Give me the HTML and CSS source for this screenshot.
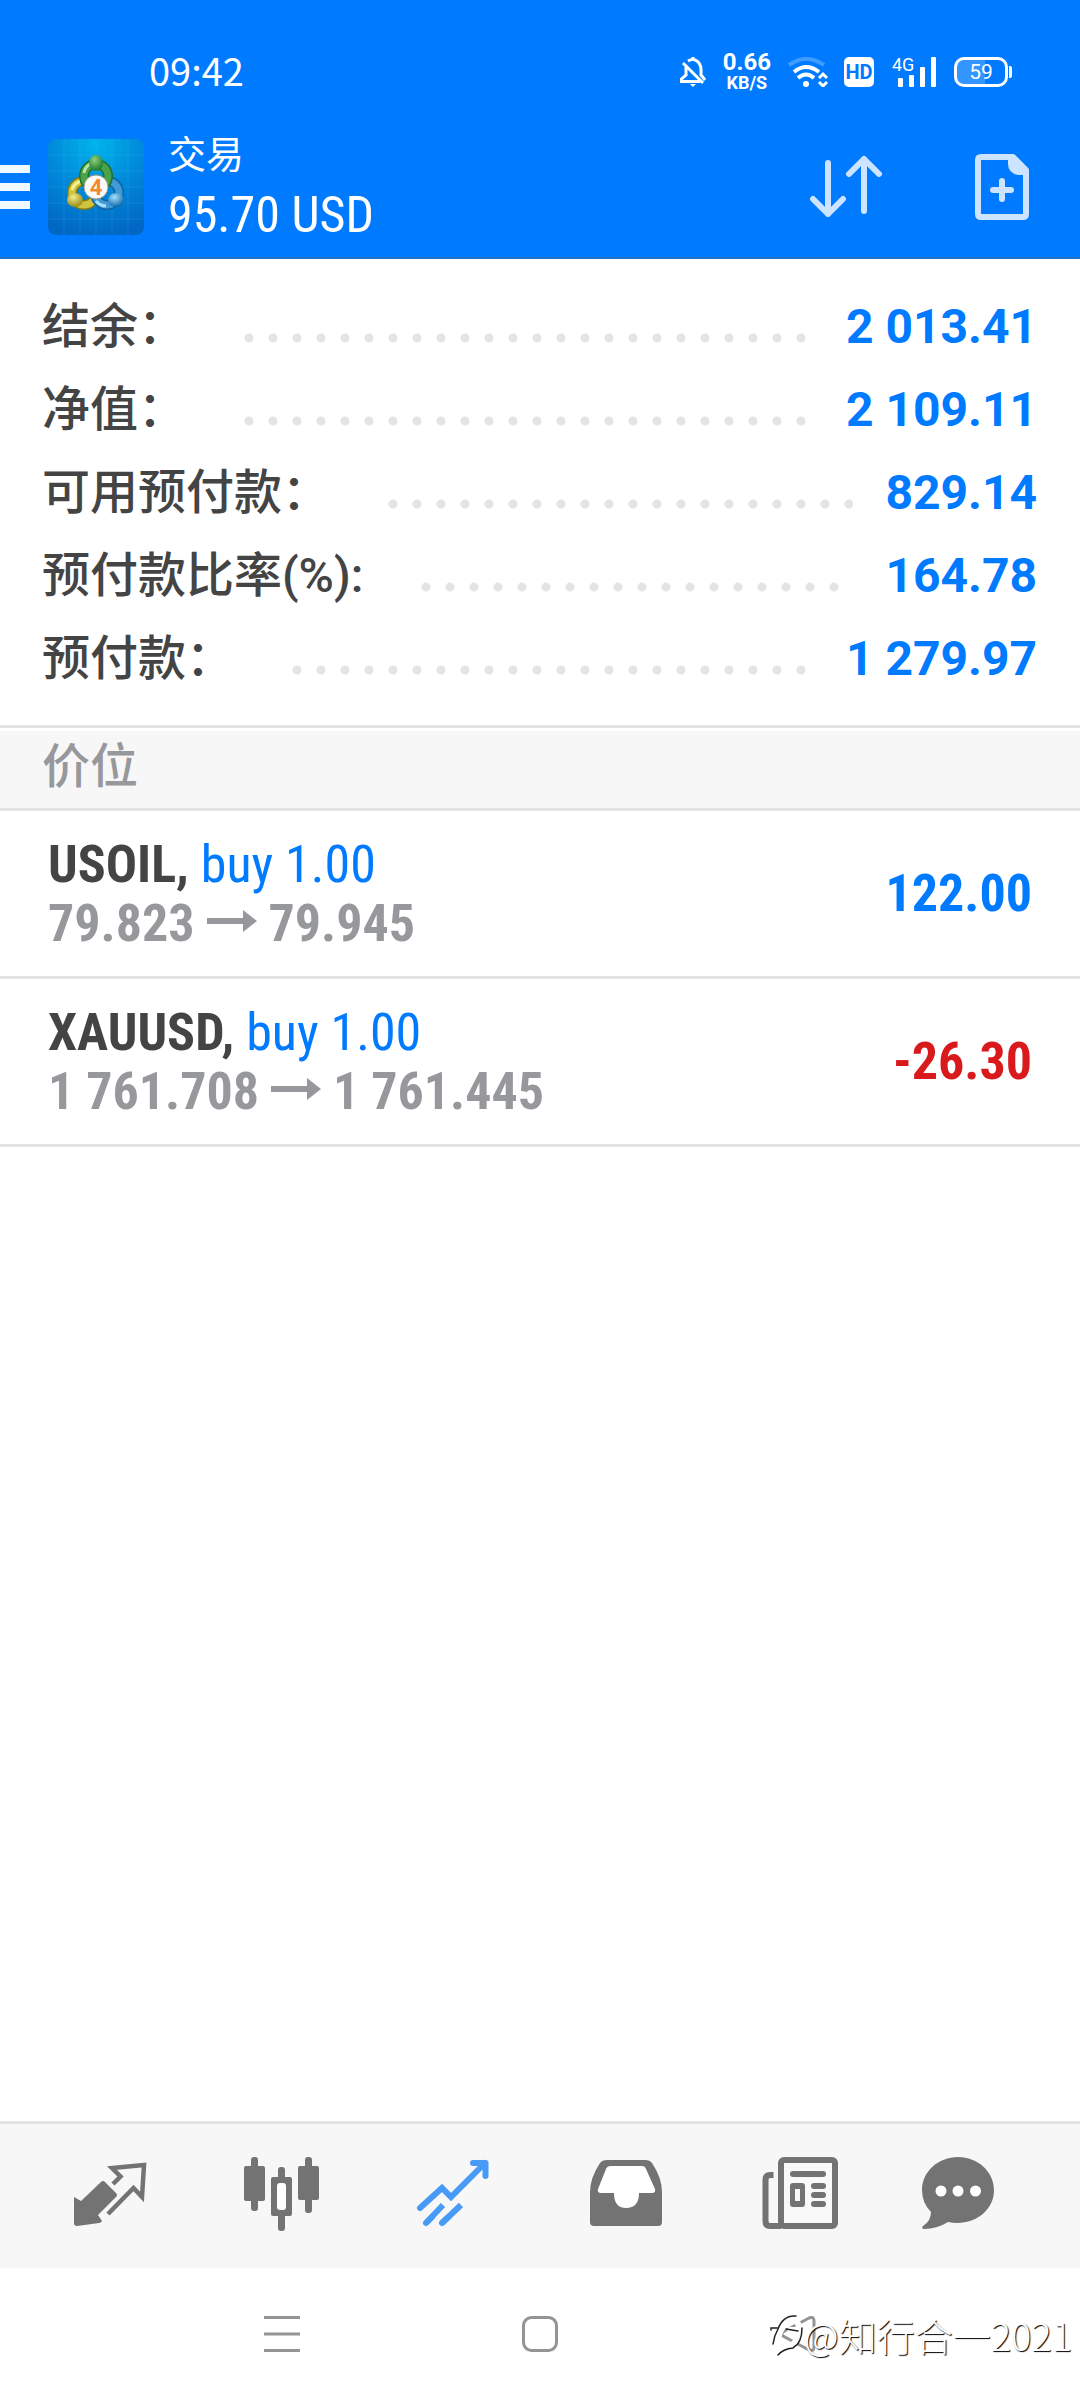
FILE: index.html
```html
<!DOCTYPE html>
<html lang="zh-CN">
  <head>
    <meta charset="utf-8">
    <meta name="viewport" content="width=device-width, initial-scale=1">
    <title>交易</title>
    <link rel="stylesheet" href="styles.css">
  </head>
  <body>
    <header class="header">
      <div class="status-bar">
        <span class="clock">09:42</span>
        <div class="status-icons">
          <svg class="bell" width="26" height="30" viewBox="0 0 26 30" fill="none" stroke="#fff" stroke-width="3">
            <path d="M8 4 Q13 1 17 4 Q21 7 21 13 V18 L25 23"/>
            <path d="M13 0 V4 M3 6 L23 26 M6 10 V18 L1.500 22 V24.500 H20"/>
            <path d="M10 27 H16 L13 30 Z" fill="#fff" stroke="none"/>
          </svg>
          <div class="net-speed">
            <span class="net-value">0.66</span>
            <span class="net-unit">KB/S</span>
          </div>
          <svg class="wifi" width="40" height="30" viewBox="0 0 40 30" fill="none" stroke="#fff" stroke-width="4">
            <path d="M1 8 Q18 -4 36 8" stroke-opacity=".25"/>
            <path d="M6 15 Q18 5 31 15 M10 21 Q18 14 26 21"/>
            <circle cx="18" cy="27" r="3" fill="#fff" stroke="none"/>
            <path d="M31 21 L35 17 L39 21 M31 25 L35 29 L39 25" stroke-width="3"/>
          </svg>
          <span class="hd">HD</span>
          <div class="signal">
            <span class="signal-type">4G</span>
            <svg width="40" height="30" viewBox="0 0 40 30" fill="#fff">
              <rect x="1" y="21" width="5" height="9" rx="1"/>
              <rect x="12" y="18" width="5" height="12" rx="1"/>
              <rect x="23" y="10" width="5" height="20" rx="1"/>
              <rect x="34" y="0" width="5" height="30" rx="1"/>
            </svg>
          </div>
          <span class="battery">59</span>
        </div>
      </div>

      <div class="toolbar">
        <button class="icon-button menu-button" aria-label="菜单">
          <svg width="30" height="44" viewBox="0 0 30 44" fill="#f0faff">
            <path d="M0 0H30V8H0Z M0 18H30V26H0Z M0 36H30V44H0Z"/>
          </svg>
        </button>
        <svg class="app-icon" width="96" height="96" viewBox="0 0 96 96">
          <defs>
            <radialGradient id="sky" cx="50%" cy="5%" r="95%">
              <stop offset="0" stop-color="#00b4ea"/>
              <stop offset=".5" stop-color="#008adb"/>
              <stop offset="1" stop-color="#0068c4"/>
            </radialGradient>
            <radialGradient id="green" cx="40%" cy="30%" r="70%">
              <stop offset="0" stop-color="#8fd07c"/>
              <stop offset="1" stop-color="#1d7a2c"/>
            </radialGradient>
            <radialGradient id="yellow" cx="40%" cy="30%" r="70%">
              <stop offset="0" stop-color="#f3ec8a"/>
              <stop offset="1" stop-color="#988c14"/>
            </radialGradient>
            <radialGradient id="blue" cx="40%" cy="30%" r="70%">
              <stop offset="0" stop-color="#a4e0fb"/>
              <stop offset="1" stop-color="#1068ac"/>
            </radialGradient>
          </defs>
          <rect width="96" height="96" rx="8" fill="url(#sky)"/>
          <path d="M16 0V96M32 0V96M48 0V96M64 0V96M80 0V96M0 16H96M0 32H96M0 48H96M0 64H96M0 80H96" stroke="#6fd0ff" stroke-opacity=".15"/>
          <g fill="none">
            <circle cx="36" cy="54" r="12" stroke="#857a10" stroke-width="10"/>
            <circle cx="36" cy="54" r="12" stroke="#cfc43c" stroke-width="7"/>
            <path d="M24 51 A13 13 0 0 1 33 42" stroke="#f5f09a" stroke-width="3"/>
            <circle cx="59" cy="54" r="12" stroke="#12609c" stroke-width="10"/>
            <circle cx="59" cy="54" r="12" stroke="#3f9ad6" stroke-width="7"/>
            <path d="M48 62 A13 13 0 0 0 58 67" stroke="#a8e0fa" stroke-width="3"/>
            <circle cx="48" cy="37" r="12" stroke="#1f6f2c" stroke-width="10"/>
            <circle cx="48" cy="37" r="12" stroke="#4ba24a" stroke-width="7"/>
            <path d="M36 34 A13 13 0 0 1 42 25" stroke="#b9e6a8" stroke-width="3"/>
          </g>
          <ellipse cx="48" cy="24" rx="7" ry="8" fill="url(#green)"/>
          <ellipse cx="27" cy="61" rx="8" ry="7" fill="url(#yellow)"/>
          <ellipse cx="68" cy="61" rx="8" ry="7" fill="url(#blue)"/>
          <circle cx="48" cy="48" r="12" fill="#fafafa" stroke="#9a9a80"/>
          <text class="app-icon-text" x="48" y="56" text-anchor="middle">4</text>
        </svg>
        <div class="title">
          <h1>交易</h1>
          <p class="profit">95.70 USD</p>
        </div>
        <button class="icon-button sort-button" aria-label="排序">
          <svg width="76" height="66" viewBox="0 0 76 66" fill="none" stroke="#cce4ff" stroke-width="6" stroke-linecap="round" stroke-linejoin="round">
            <path d="M19 9V60M4 45L19 60L34 45M55 57V5M40 20L55 5L70 20"/>
          </svg>
        </button>
        <button class="icon-button" aria-label="新订单">
          <svg width="54" height="66" viewBox="0 0 54 66" fill="none" stroke="#cce4ff" stroke-width="6">
            <path d="M6 3H38L51 16V60Q51 63 48 63H6Q3 63 3 60V6Q3 3 6 3Z" stroke-linejoin="round"/>
            <path d="M33 3H40L53 17V21H43Q33 19 33 10Z" fill="#cce4ff" stroke="none"/>
            <path d="M27 27V45M18 36H36" stroke-linecap="round"/>
          </svg>
        </button>
      </div>
    </header>

    <main>
      <dl class="account">
        <div class="account-row">
          <dt>结余：</dt><dd>2 013.41</dd>
        </div>
        <div class="account-row">
          <dt>净值：</dt><dd>2 109.11</dd>
        </div>
        <div class="account-row">
          <dt>可用预付款：</dt><dd>829.14</dd>
        </div>
        <div class="account-row">
          <dt>预付款比率(%):</dt><dd>164.78</dd>
        </div>
        <div class="account-row">
          <dt>预付款：</dt><dd>1 279.97</dd>
        </div>
      </dl>

      <h2 class="section-title">价位</h2>

      <ul class="positions">
        <li class="position">
          <div>
            <p class="symbol">USOIL, <span class="buy">buy 1.00</span></p>
            <p class="prices">79.823
              <svg class="arrow" width="50" height="22" viewBox="0 0 50 22" fill="#97989c"><path d="M0 8H36V0L50 11L36 22V14H0Z"/></svg>
              79.945</p>
          </div>
          <span class="result">122.00</span>
        </li>
        <li class="position">
          <div>
            <p class="symbol">XAUUSD, <span class="buy">buy 1.00</span></p>
            <p class="prices">1 761.708
              <svg class="arrow" width="50" height="22" viewBox="0 0 50 22" fill="#97989c"><path d="M0 8H36V0L50 11L36 22V14H0Z"/></svg>
              1 761.445</p>
          </div>
          <span class="result loss">-26.30</span>
        </li>
      </ul>
    </main>

    <nav class="tabs">
      <button class="icon-button" aria-label="行情">
        <svg width="104" height="84" viewBox="0 0 104 84" fill="#737373">
          <path d="M16 43L23 47L43 28Q45 26 47 28L58 39Q60 41 58 43L40 61L44 67Q43 69 41 69L19 72Q16 72 16 69Z"/>
          <path d="M55 30L62.500 22.500L54 14L86 11L84 43L75.500 34L50 60" fill="none" stroke="#737373" stroke-width="4.500"/>
        </svg>
      </button>
      <button class="icon-button" aria-label="图表">
        <svg width="104" height="84" viewBox="0 0 104 84" fill="#737373">
          <rect x="21" y="3" width="7" height="54" rx="3"/>
          <rect x="14" y="12" width="21" height="35" rx="2"/>
          <rect x="48" y="13" width="7" height="64" rx="3"/>
          <rect x="41" y="23" width="21" height="39" rx="2"/>
          <rect x="47" y="29" width="9" height="27" rx="3" fill="#fff"/>
          <rect x="75" y="3" width="7" height="56" rx="3"/>
          <rect x="68" y="12" width="21" height="34" rx="2"/>
        </svg>
      </button>
      <button class="icon-button" aria-label="交易">
        <svg width="104" height="84" viewBox="0 0 104 84" fill="none" stroke="#479af6" stroke-width="6">
          <path d="M17 54L39 34L48 43L82 9" stroke-linecap="round"/>
          <path d="M70 9H82.500V22" stroke-linecap="round" stroke-linejoin="round"/>
          <path d="M23 69L40 51M39 69L58 51"/>
          <path d="M23 69L29 63M39 69L45 63.500" stroke-linecap="round"/>
        </svg>
      </button>
      <button class="icon-button" aria-label="历史">
        <svg width="104" height="84" viewBox="0 0 104 84" fill="#737373">
          <path d="M32 6H70Q75 6 77 9Q87 24 87 38V68Q87 72 83 72H19Q15 72 15 68V38Q15 24 25 9Q27 6 32 6Z"/>
          <path d="M36 12H67Q70 12 71 15L80 35Q81 39 77 39H64Q64 54 51 54Q39 54 39 39H26Q22 39 23 35L31 15Q32 12 36 12Z" fill="#fff"/>
        </svg>
      </button>
      <button class="icon-button" aria-label="新闻">
        <svg width="104" height="84" viewBox="0 0 104 84" fill="#737373">
          <path d="M34 72H23Q18.500 72 18.500 67V26Q18.500 21 23 21H26.500" fill="none" stroke="#737373" stroke-width="6"/>
          <rect x="34" y="6" width="54" height="66" rx="3" fill="#f9f9f9" stroke="#737373" stroke-width="6"/>
          <rect x="43" y="17" width="36" height="6" rx="3"/>
          <rect x="43" y="29" width="15" height="24" rx="3"/>
          <rect x="48" y="35" width="5" height="12" fill="#f7f7f7"/>
          <rect x="64" y="29" width="15" height="6" rx="3"/>
          <rect x="64" y="38" width="15" height="6" rx="3"/>
          <rect x="64" y="47" width="15" height="6" rx="3"/>
        </svg>
      </button>
      <button class="icon-button" aria-label="消息">
        <svg width="104" height="84" viewBox="0 0 104 84" fill="#737373">
          <path d="M38 3C58 3 74 18 74 36C74 58 52 73 28 68Q17 75 4 75Q1 75 3 72Q11 67 11 58Q2 49 2 36C2 18 18 3 38 3Z"/>
          <g fill="#fff"><circle cx="21" cy="37" r="5.500"/><circle cx="38" cy="37" r="5.500"/><circle cx="55.500" cy="37" r="5.500"/></g>
        </svg>
      </button>
    </nav>

    <footer class="system-nav">
      <button class="icon-button" aria-label="最近任务">
        <svg width="36" height="36" viewBox="0 0 36 36" stroke="#949494" stroke-width="3"><path d="M0 1.500H36M0 18H36M0 34.500H36"/></svg>
      </button>
      <button class="icon-button" aria-label="主屏幕">
        <svg width="36" height="36" viewBox="0 0 36 36" fill="none" stroke="#949494" stroke-width="3"><rect x="1.500" y="1.500" width="33" height="33" rx="8"/></svg>
      </button>
      <button class="icon-button" aria-label="返回">
        <svg width="36" height="36" viewBox="0 0 36 36" fill="none" stroke="#949494" stroke-width="3"><path d="M3 16L29 2Q34 0 34 5V31Q34 36 29 34L3 20Q1 18 3 16Z"/></svg>
      </button>
      <div class="watermark">
        <svg width="34" height="46" viewBox="0 0 34 46" fill="none" stroke-linecap="round">
          <path d="M3 19H10L6 33Q11 12 20 8Q29 6 29 18L18 18L29 22Q27 31 18 36" stroke="#fff" stroke-width="6"/>
          <path d="M1 18V16H8M3 32Q4 24 8 17Q13 3 26 4M16 17L28 19M32 16Q32 31 23 36Q13 37 8 43" stroke="#222" stroke-width="1.500"/>
        </svg>
        <span>@知行合一2021</span>
      </div>
    </footer>
  </body>
</html>
```

FILE: styles.css
```css
* {
  box-sizing: border-box;
}
body {
  margin: 0;
  min-height: 100vh;
  display: flex;
  flex-direction: column;
  background: #fff;
  color: #444;
  font-family: Roboto, "Noto Sans CJK SC", sans-serif;
}
h1, h2, p, dl, dd, ul {
  margin: 0;
  padding: 0;
}
main {
  flex: 1;
}
svg {
  display: block;
  flex-shrink: 0;
}
.icon-button {
  display: flex;
  align-items: center;
  justify-content: center;
  padding: 0;
  border: none;
  background: none;
  cursor: pointer;
}

/* header */
.header {
  background: #007aff;
  border-bottom: 2px solid #1c6fcb;
  color: #fff;
}
.status-bar {
  display: flex;
  align-items: center;
  justify-content: space-between;
  height: 118px;
  padding: 26px 72px 0 149px;
}
.clock {
  padding-bottom: 6px;
  font-family: "Noto Sans CJK SC", sans-serif;
  font-size: 38px;
}
.status-icons {
  display: flex;
  align-items: center;
}
.net-speed {
  display: flex;
  flex-direction: column;
  align-items: center;
  margin: 0 17px;
  font-weight: 700;
}
.net-value {
  font-size: 24px;
  line-height: 22px;
}
.net-unit {
  font-size: 18px;
  line-height: 20px;
}
.hd {
  width: 30px;
  height: 30px;
  margin: 0 18px 0 16px;
  border-radius: 5px;
  background: #fff;
  color: #007aff;
  font-size: 20px;
  font-weight: 700;
  line-height: 31px;
  text-align: center;
}
.signal {
  position: relative;
  padding-left: 5px;
}
.signal-type {
  position: absolute;
  top: -1px;
  left: 0;
  font-size: 18px;
  line-height: 18px;
}
.battery {
  position: relative;
  width: 54px;
  height: 30px;
  margin-left: 17px;
  border: 3px solid #fff;
  border-radius: 10px;
  background: linear-gradient(90deg, #3395ff 59%, #007aff 59%);
  font-size: 21px;
  line-height: 24px;
  text-align: center;
}
.battery::after {
  content: "";
  position: absolute;
  top: 6px;
  right: -7px;
  width: 3px;
  height: 12px;
  border-radius: 0 2px 2px 0;
  background: #fff;
}
.toolbar {
  display: flex;
  align-items: center;
  height: 139px;
  padding: 0 51px 2px 0;
}
.menu-button {
  margin-right: 18px;
}
.app-icon-text {
  fill: #f58a2c;
  font-size: 22px;
  font-weight: 700;
}
.title {
  flex: 1;
  padding: 0 0 4px 24px;
  line-height: 60px;
}
.title h1 {
  font-size: 38px;
  font-weight: 400;
}
.profit {
  font-family: "Roboto Condensed", Roboto, sans-serif;
  font-size: 50px;
}
.sort-button {
  margin-right: 90px;
}

/* account summary */
.account {
  padding: 26px 43px 25px 42px;
}
.account-row {
  display: flex;
  align-items: center;
  height: 83px;
  font-size: 48px;
  line-height: 56px;
}
.account-row dt {
  font-weight: 500;
}
.account-row dd {
  flex: 1;
  display: flex;
  align-items: center;
  color: #007aff;
  font-weight: 700;
  white-space: nowrap;
}
/* dotted leader between label and value */
.account-row dd::before {
  content: "";
  flex: 1;
  height: 24px;
  margin: 22px 32px 0 51px;
  background: radial-gradient(circle, #e4e4e4 4px, transparent 5px) 0 0 / 24px 24px repeat-x;
}
.section-title {
  height: 86px;
  padding-left: 42px;
  border-top: 3px solid #e3e3e3;
  border-bottom: 3px solid #e3e3e3;
  background: #f7f7f7;
  box-shadow: inset 0 3px #fff;
  color: #97989c;
  font-size: 48px;
  font-weight: 500;
  line-height: 78px;
}

/* open positions */
.positions {
  list-style: none;
}
.position {
  display: flex;
  align-items: center;
  justify-content: space-between;
  height: 168px;
  padding: 0 48px;
  border-bottom: 3px solid #e3e3e3;
  font-family: "Roboto Condensed", Roboto, sans-serif;
  font-size: 52px;
  font-weight: 700;
  line-height: 59px;
}
.buy {
  color: #007aff;
  font-weight: 400;
}
.prices {
  color: #97989c;
}
.arrow {
  display: inline-block;
  vertical-align: 9px;
}
.result {
  color: #007aff;
}
.loss {
  color: #d9191c;
}

/* bottom bars */
.tabs {
  display: grid;
  grid-template-columns: repeat(6, 1fr);
  padding: 30px 22px 30px 24px;
  border-top: 3px solid #e3e3e3;
  background: #f7f7f7;
}
.system-nav {
  position: relative;
  display: flex;
  justify-content: center;
  height: 132px;
}
.system-nav .icon-button {
  width: 258px;
}
.watermark {
  position: absolute;
  right: 8px;
  bottom: 37px;
  display: flex;
  align-items: center;
  color: #fff;
  font-family: "Noto Sans CJK SC", sans-serif;
  font-size: 38px;
  font-weight: 300;
  line-height: 56px;
  text-shadow: 1px 1px 1px #000;
}
```
